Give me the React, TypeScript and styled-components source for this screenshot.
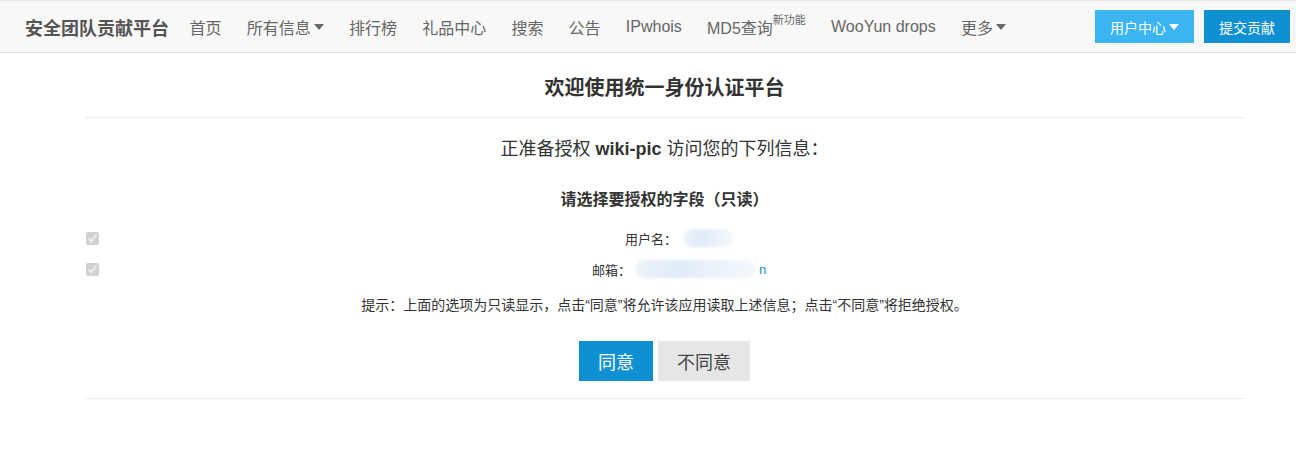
import React from 'react';
import styled, { createGlobalStyle } from 'styled-components';

const GlobalStyle = createGlobalStyle`
  html, body {
    margin: 0;
    padding: 0;
    background: #fff;
  }
  body {
    font-family: "Helvetica Neue", "Liberation Sans", "Noto Sans CJK SC", sans-serif;
    color: #333;
  }
`;

const NAV_ITEMS: { label: string; caret?: boolean; sup?: string }[] = [
  { label: '首页' },
  { label: '所有信息', caret: true },
  { label: '排行榜' },
  { label: '礼品中心' },
  { label: '搜索' },
  { label: '公告' },
  { label: 'IPwhois' },
  { label: 'MD5查询', sup: '新功能' },
  { label: 'WooYun drops' },
  { label: '更多', caret: true },
];

const Navbar = styled.header`
  height: 53px;
  box-sizing: border-box;
  background: #f8f8f8;
  border-top: 1px solid #e7e7e7;
  border-bottom: 1px solid #dcdcdc;
  display: flex;
  align-items: center;
  padding: 0 6px 0 25px;
`;

const Brand = styled.div`
  font-size: 18px;
  font-weight: bold;
  color: #555;
  margin-right: 8px;
  white-space: nowrap;
`;

const NavList = styled.nav`
  display: flex;
  align-items: center;
  flex: 1;
`;

const NavItem = styled.a`
  display: flex;
  align-items: center;
  padding: 0 12.6px;
  font-size: 16px;
  color: #666;
  text-decoration: none;
  white-space: nowrap;
  height: 51px;
`;

const Sup = styled.sup`
  font-size: 11px;
  align-self: flex-start;
  margin-top: 14px;
  line-height: 1;
`;

const Caret = styled.span<{ light?: boolean }>`
  display: inline-block;
  width: 0;
  height: 0;
  margin-left: 3px;
  border-left: 5px solid transparent;
  border-right: 5px solid transparent;
  border-top: 6px solid ${({ light }) => (light ? '#fff' : '#666')};
`;

const NavButtons = styled.div`
  display: flex;
  gap: 10px;
  align-items: center;
`;

const NavButton = styled.a<{ secondary?: boolean }>`
  display: flex;
  align-items: center;
  justify-content: center;
  height: 33px;
  padding: 0 15px;
  font-size: 14px;
  color: #fff;
  background: ${({ secondary }) => (secondary ? '#3bb4f2' : '#0e90d2')};
  text-decoration: none;
  white-space: nowrap;
`;

const Container = styled.main`
  margin: 0 51px 0 84px;
`;

const Title = styled.h2`
  margin: 0;
  padding-top: 21px;
  height: 65px;
  box-sizing: border-box;
  text-align: center;
  font-size: 20px;
  font-weight: bold;
  color: #333;
  line-height: 28px;
  border-bottom: 1px solid #eee;
`;

const Subtitle = styled.p`
  margin: 18px 0 0;
  text-align: center;
  font-size: 18px;
  line-height: 26px;
  color: #333;
`;

const FieldsTitle = styled.h3`
  margin: 26px 0 0;
  text-align: center;
  font-size: 16px;
  font-weight: bold;
  line-height: 24px;
  color: #333;
`;

const FieldList = styled.div`
  margin-top: 15px;
  display: flex;
  flex-direction: column;
  gap: 9px;
`;

const FieldRow = styled.label`
  display: flex;
  align-items: center;
  height: 22px;
  font-size: 13px;
  color: #333;
`;

const Check = styled.input`
  flex: none;
  width: 13px;
  height: 13px;
  margin: 0 14px 0 2px;
`;

const FieldText = styled.span`
  flex: 1;
  display: flex;
  justify-content: center;
  align-items: center;
`;

const Blurred = styled.span<{ w: number; gap?: number }>`
  display: inline-block;
  width: ${({ w }) => w}px;
  height: 18px;
  margin-left: ${({ gap }) => gap ?? 0}px;
  border-radius: 9px;
  background: linear-gradient(90deg, #edf4fb 0%, #dfecf8 35%, #e8f1fa 60%, #f4f8fc 100%);
  filter: blur(1px);
`;

const LinkTail = styled.span`
  color: #0e90d2;
  margin-left: 3px;
`;

const Hint = styled.p`
  margin: 15px 0 0;
  text-align: center;
  font-size: 14px;
  line-height: 20px;
  color: #333;
`;

const Actions = styled.div`
  display: flex;
  justify-content: center;
  gap: 5px;
  margin-top: 26px;
  padding-bottom: 17px;
  border-bottom: 1px solid #eee;
`;

const ActionButton = styled.button<{ primary?: boolean }>`
  height: 40px;
  padding: 0 19px;
  border: none;
  font-family: inherit;
  font-size: 18px;
  color: ${({ primary }) => (primary ? '#fff' : '#444')};
  background: ${({ primary }) => (primary ? '#0e90d2' : '#e6e6e6')};
  cursor: pointer;
`;

export default function App() {
  return (
    <>
      <GlobalStyle />
      <Navbar>
        <Brand>安全团队贡献平台</Brand>
        <NavList>
          {NAV_ITEMS.map((item) => (
            <NavItem key={item.label} href="#">
              {item.label}
              {item.sup && <Sup>{item.sup}</Sup>}
              {item.caret && <Caret />}
            </NavItem>
          ))}
        </NavList>
        <NavButtons>
          <NavButton secondary href="#">
            用户中心
            <Caret light />
          </NavButton>
          <NavButton href="#">提交贡献</NavButton>
        </NavButtons>
      </Navbar>
      <Container>
        <Title>欢迎使用统一身份认证平台</Title>
        <Subtitle>
          正准备授权 <b>wiki-pic</b> 访问您的下列信息：
        </Subtitle>
        <FieldsTitle>请选择要授权的字段（只读）</FieldsTitle>
        <FieldList>
          <FieldRow>
            <Check type="checkbox" checked disabled readOnly />
            <FieldText>
              用户名：
              <Blurred w={50} gap={6} />
            </FieldText>
          </FieldRow>
          <FieldRow>
            <Check type="checkbox" checked disabled readOnly />
            <FieldText>
              邮箱：
              <Blurred w={121} gap={4} />
              <LinkTail>n</LinkTail>
            </FieldText>
          </FieldRow>
        </FieldList>
        <Hint>提示：上面的选项为只读显示，点击“同意”将允许该应用读取上述信息；点击“不同意”将拒绝授权。</Hint>
        <Actions>
          <ActionButton primary>同意</ActionButton>
          <ActionButton>不同意</ActionButton>
        </Actions>
      </Container>
    </>
  );
}
